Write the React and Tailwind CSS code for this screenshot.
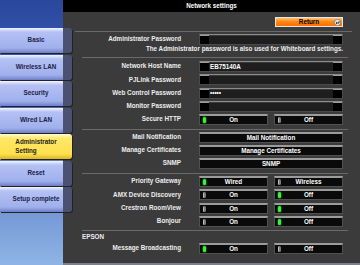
const navItems = ["Basic", "Wireless LAN", "Security", "Wired LAN", "Administrator Setting", "Reset", "Setup complete"];

const NavButton = ({ label, active }) => {
  if (active) {
    return (
      <div className="w-[72px] h-[25px] rounded-r-[3px] bg-[linear-gradient(to_bottom,#fffbd0,#ffe868_18%,#ffe04c_80%,#d9b52a)] flex items-center justify-center shadow-[1px_1px_0_#222]">
        <span className="text-left leading-[8.5px] text-[#1e1e1e]">
          Administrator
          <br />
          Setting
        </span>
      </div>
    );
  }
  return (
    <div className="w-[72px] h-[25px] rounded-r-[3px] bg-[linear-gradient(to_right,transparent_63px,#4b5170_63px),linear-gradient(to_bottom,#f4f6ff,#b4c1f5_16%,#a0b0ec_80%,#6e7ec6)] flex items-center justify-center text-[#1a2145] shadow-[1px_1px_0_#222]">
      {label}
    </div>
  );
};

const Led = ({ on }) =>
  on ? (
    <div className="w-[3px] h-[6px] rounded-full bg-[#3cf03c] shadow-[0_0_2px_#4f4]" />
  ) : (
    <div className="w-[3px] h-[6px] rounded-full bg-[#7a7a7a] border-l border-[#c0c0c0]" />
  );

const Toggle = ({ label, on }) => (
  <div className="w-[69px] h-[11px] flex items-center bg-[#0a0a0a] border border-[#505050] border-t-2 border-t-[#9c9c9c]">
    <div className="w-[8px] flex justify-center">
      <Led on={on} />
    </div>
    <div className="flex-1 text-center text-white">{label}</div>
    <div className="w-[8px]" />
  </div>
);

const ActionButton = ({ label }) => (
  <div className="w-[144px] h-[11px] flex items-center justify-center bg-[#0a0a0a] border border-[#505050] border-t-2 border-t-[#9c9c9c] text-white">
    {label}
  </div>
);

const Field = ({ value }) => (
  <div className="w-[144px] h-[11px] flex bg-black border border-[#4a4a4a] border-t-[#8c8c8c]">
    <div className="w-[9px] border-t border-[#9c9c9c]" />
    <div className="flex-1 bg-[#1e1e1e] border-t border-[#3a3a3a] flex items-center pl-[1px] text-white">
      {value}
    </div>
    <div className="w-[9px] border-t border-[#9c9c9c]" />
  </div>
);

const Row = ({ label, children }) => (
  <div className="flex items-center h-[11px]">
    <div className="w-[118px] text-right text-[#ededed] whitespace-nowrap">{label}</div>
    <div className="ml-[18px] flex gap-[6px]">{children}</div>
  </div>
);

const Line = ({ first }) => (
  <div className={first ? "h-px ml-[12px] mr-[8px] bg-[#6a6a6a]" : "h-px ml-[19px] mr-[12px] bg-[#6a6a6a]"} />
);

export default function App() {
  return (
    <div className="w-[360px] h-[265px] flex overflow-hidden font-['Liberation_Sans',Arial,sans-serif] font-bold text-[6.3px] leading-none">
      <div className="w-[63px] shrink-0 bg-[linear-gradient(to_bottom,#2a479e,#4d6fc2_50%,#8fb4e4)] relative z-10">
        <div className="mt-[28px] flex flex-col gap-[1.5px]">
          {navItems.map((item) => (
            <NavButton key={item} label={item} active={item === "Administrator Setting"} />
          ))}
        </div>
      </div>

      <div className="flex-1 bg-[#3b3b3b] flex flex-col border-b-2 border-[#7c808c]">
        <div className="h-[12px] bg-black flex items-center justify-center text-white">Network settings</div>

        <div className="mt-[5px] flex justify-end pr-[17px]">
          <div className="w-[68px] h-[10px] flex items-center border border-[#e6e6e6] bg-[linear-gradient(to_bottom,#ffc27a,#ff8a12_45%,#ff6c00)] text-black">
            <div className="w-[10px]" />
            <div className="flex-1 text-center">Return</div>
            <div className="w-[10px] flex justify-center">
              <svg width="7" height="7" viewBox="0 0 14 14">
                <circle cx="7" cy="7" r="6.3" fill="#e8e8e8" stroke="#444" strokeWidth="1" />
                <path d="M10 4.5 V8 H5" fill="none" stroke="#222" strokeWidth="1.8" />
                <path d="M6 5.5 L3.5 8 L6 10.5 Z" fill="#222" />
              </svg>
            </div>
          </div>
        </div>

        <div className="mt-[4px]">
          <Line first />
        </div>
        <div className="mt-[2px]">
          <Row label="Administrator Password">
            <Field value="" />
          </Row>
        </div>
        <div className="mt-[1px] h-[7px] flex items-center justify-end pr-[17px] text-[#ededed] whitespace-nowrap">
          The Administrator password is also used for Whiteboard settings.
        </div>

        <div className="mt-[4px]">
          <Line />
        </div>
        <div className="mt-[3px] flex flex-col gap-[2.25px]">
          <Row label="Network Host Name">
            <Field value="EB75140A" />
          </Row>
          <Row label="PJLink Password">
            <Field value="" />
          </Row>
          <Row label="Web Control Password">
            <Field value="•••••" />
          </Row>
          <Row label="Monitor Password">
            <Field value="" />
          </Row>
          <Row label="Secure HTTP">
            <Toggle label="On" on />
            <Toggle label="Off" />
          </Row>
        </div>

        <div className="mt-[4px]">
          <Line />
        </div>
        <div className="mt-[2px] flex flex-col gap-[2px]">
          <Row label="Mail Notification">
            <ActionButton label="Mail Notification" />
          </Row>
          <Row label="Manage Certificates">
            <ActionButton label="Manage Certificates" />
          </Row>
          <Row label="SNMP">
            <ActionButton label="SNMP" />
          </Row>
        </div>

        <div className="mt-[4px]">
          <Line />
        </div>
        <div className="mt-[2px] flex flex-col gap-[2.33px]">
          <Row label="Priority Gateway">
            <Toggle label="Wired" on />
            <Toggle label="Wireless" />
          </Row>
          <Row label="AMX Device Discovery">
            <Toggle label="On" />
            <Toggle label="Off" on />
          </Row>
          <Row label="Crestron RoomView">
            <Toggle label="On" />
            <Toggle label="Off" on />
          </Row>
          <Row label="Bonjour">
            <Toggle label="On" />
            <Toggle label="Off" on />
          </Row>
        </div>

        <div className="mt-[3px]">
          <Line />
        </div>
        <div className="mt-[3px] h-[7px] flex items-center ml-[19px] text-[#ededed]">EPSON</div>
        <div className="mt-[2px]">
          <Row label="Message Broadcasting">
            <Toggle label="On" on />
            <Toggle label="Off" />
          </Row>
        </div>
      </div>
    </div>
  );
}
